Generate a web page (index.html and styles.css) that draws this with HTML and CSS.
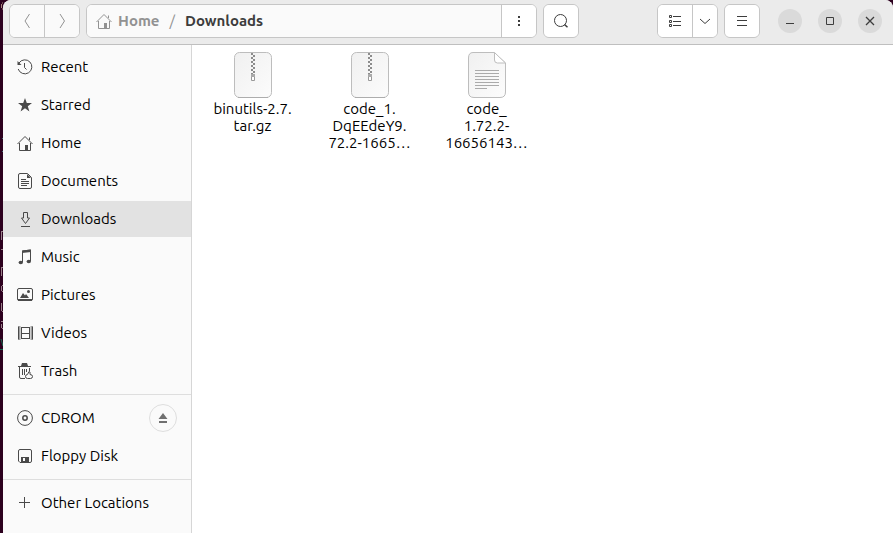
FILE: index.html
```html
<!DOCTYPE html>
<html lang="en">
<head>
<meta charset="utf-8">
<meta name="viewport" content="width=device-width, initial-scale=1">
<title>Downloads</title>
<link rel="stylesheet" href="styles.css">
</head>
<body>
<div class="desktop">
  <svg class="backdrop" viewBox="0 0 3 533" aria-hidden="true">
    <path d="M1.500 4v4M2 3h1M2 9h1" stroke="#a8847c"/>
    <path d="M2 138.500h1M2 151.500h1" stroke="#466d78"/>
    <path d="M1.500 231v9M2 231.500h1M1 249.500h2M1.500 267v9M2 267.500h1M1.500 286v5M2 285.500h1M2 291.500h1M1.500 303v8M2 311.500h1M1.500 324v4M1 321.500h2M2 328.500h1" stroke="#987f88"/>
    <path d="M1 339l2 7M0 349.500h3" stroke="#176a4d"/>
  </svg>
  <div class="window">
    <header class="headerbar">
      <div class="group">
        <button class="btn dim" type="button" aria-label="Back"><svg width="16" height="16" viewBox="0 0 16 16"><path d="M10.500 1 6 8l4.500 7"/></svg></button>
        <button class="btn dim" type="button" aria-label="Forward"><svg width="16" height="16" viewBox="0 0 16 16"><path d="M6 1l4.500 7L6 15"/></svg></button>
      </div>
      <div class="group pathbar">
        <nav class="crumbs" aria-label="Path">
          <a class="crumb" href="#home"><svg width="16" height="16" viewBox="0 0 16 16"><path d="M.5 9 8 1.500 15.500 9M2.500 8v7.500h11V8M12.500 5V2.500"/><path class="solid" d="M8 10h3v5H8z"/></svg>Home</a>
          <span class="slash">/</span>
          <a class="crumb current" href="#downloads">Downloads</a>
        </nav>
        <button class="btn" type="button" aria-label="Path menu"><svg width="16" height="16" viewBox="0 0 16 16"><path class="solid" d="M7 3h2v2H7zM7 7h2v2H7zM7 11h2v2H7z"/></svg></button>
      </div>
      <div class="group">
        <button class="btn" type="button" aria-label="Search"><svg width="16" height="16" viewBox="0 0 16 16"><circle cx="7.500" cy="7.500" r="6"/><path d="M11.500 11.500 14.500 14.300" stroke-width="1.500"/></svg></button>
      </div>
      <div class="spacer"></div>
      <div class="group">
        <button class="btn" type="button" aria-label="List view"><svg width="16" height="16" viewBox="0 0 16 16"><path d="M6 3.500h8M6 8.500h8M6 12.500h8M2.500 2.500h2v2h-2zM2.500 7.500h2v2h-2zM2.500 11.500h2v2h-2z"/></svg></button>
        <button class="btn narrow" type="button" aria-label="View options"><svg width="16" height="16" viewBox="0 0 16 16"><path d="m3 6 5 4.500L13 6"/></svg></button>
      </div>
      <div class="group">
        <button class="btn" type="button" aria-label="Main menu"><svg width="16" height="16" viewBox="0 0 16 16"><path d="M3 3.500h10M3 7.500h10M3 12.500h10"/></svg></button>
      </div>
      <div class="controls">
        <button class="round" type="button" aria-label="Minimize"><svg width="16" height="16" viewBox="0 0 16 16"><path d="M4 10.500h8"/></svg></button>
        <button class="round" type="button" aria-label="Maximize"><svg width="16" height="16" viewBox="0 0 16 16"><path d="M4.500 4.500h7v7h-7z"/></svg></button>
        <button class="round" type="button" aria-label="Close"><svg width="16" height="16" viewBox="0 0 16 16"><path d="m4 4 8 8M12 4l-8 8" stroke-width="1.300"/></svg></button>
      </div>
    </header>
    <div class="body">
      <aside class="sidebar">
        <ul class="places">
          <li class="row"><a class="place" href="#recent"><svg width="16" height="16" viewBox="0 0 16 16"><path d="M2 4A7 7 0 1 1 1.200 10M7.500 4v4.500l2 2"/><path class="solid" d="M.5 2v4h4z"/></svg>Recent</a></li>
          <li class="row"><a class="place" href="#starred"><svg width="16" height="16" viewBox="0 0 16 16"><path class="solid" d="m8 1 1.800 5H15l-4.200 3.200L12.400 14.500 8 11.300l-4.400 3.200 1.600-5.300L1 6h5.200z"/></svg>Starred</a></li>
          <li class="row"><a class="place" href="#home"><svg width="16" height="16" viewBox="0 0 16 16"><path d="M.5 9 8 1.500 15.500 9M2.500 8v7.500h11V8M12.500 5V2.500"/><path class="solid" d="M8 10h3v5H8z"/></svg>Home</a></li>
          <li class="row"><a class="place" href="#documents"><svg width="16" height="16" viewBox="0 0 16 16"><path d="M3 .5h7.500l4 4V14q0 1.500-1.500 1.500H3Q1.500 15.500 1.500 14V2Q1.500.5 3 .5M4 6.500h5M4 8.500h8M4 10.500h8M4 12.500h6"/><path class="solid" d="M10 1v4h4z"/></svg>Documents</a></li>
          <li class="row selected"><a class="place" href="#downloads" aria-current="page"><svg width="16" height="16" viewBox="0 0 16 16"><path d="M6.500 1.500h4V7h2L8.500 12.500 4.500 7h2zM4 15.500h9"/></svg>Downloads</a></li>
          <li class="row"><a class="place" href="#music"><svg width="16" height="16" viewBox="0 0 16 16"><path d="M5.500 13V2l8-1v11"/><path class="solid" d="M5 1.500 14 .5V3L5 4z"/><ellipse class="solid" cx="3.800" cy="13.500" rx="2.200" ry="1.800"/><ellipse class="solid" cx="11.800" cy="12.500" rx="2.200" ry="1.800"/></svg>Music</a></li>
          <li class="row"><a class="place" href="#pictures"><svg width="16" height="16" viewBox="0 0 16 16"><rect x=".5" y="1.500" width="15" height="12" rx="1.500"/><path class="solid" d="M1 12h14v2H1zM3 11l3-5 2 2.500L9 7l3 4z"/><circle class="solid" cx="11.500" cy="4.500" r="1.500"/></svg>Pictures</a></li>
          <li class="row"><a class="place" href="#videos"><svg width="16" height="16" viewBox="0 0 16 16"><path d="M4.500 2v12M12.500 2v12M4 2.500h9M4 8.500h9M4 13.500h9"/><path d="M2.500 1.500v13M14.500 1.500v13" stroke-width="2" stroke-dasharray="1 1"/><path d="M1.500 1.500v13M15.500 1.500v13"/></svg>Videos</a></li>
          <li class="row"><a class="place" href="#trash"><svg width="16" height="16" viewBox="0 0 16 16"><path d="M1 3.500h13M2.500 4v10q0 1.500 1.500 1.500h4M12.500 5v3M5.500 6v6M7.500 6v6M9.500 6v3"/><path class="solid" d="M5 0h5l1 3H4z"/><path d="M8.500 13.500q0-2 2-2l1.500-3 1 .5v2.500q2.500 0 2.500 2t-2 2h-3q-2 0-2-2"/></svg>Trash</a></li>
        </ul>
        <ul class="places">
          <li class="row"><a class="place" href="#cdrom"><svg width="16" height="16" viewBox="0 0 16 16"><circle cx="8" cy="8" r="7.400"/><circle cx="8" cy="8" r="2.200" stroke-width="1.500"/></svg>CDROM</a><button class="eject" type="button" aria-label="Eject CDROM"><svg width="16" height="16" viewBox="0 0 16 16"><path class="solid" d="m8 3 4.500 6h-9zM4 11h8v2H4z"/></svg></button></li>
          <li class="row"><a class="place" href="#floppy"><svg width="16" height="16" viewBox="0 0 16 16"><path d="M3 1.500h10q1.500 0 1.500 1.500v10q0 1.500-1.500 1.500H3L1.500 13V3Q1.500 1.500 3 1.500"/><path class="solid" fill-rule="evenodd" d="M4 9h8v5H4zM6 10v3h2v-3z"/></svg>Floppy Disk</a></li>
        </ul>
        <ul class="places">
          <li class="row"><a class="place" href="#other"><svg width="16" height="16" viewBox="0 0 16 16"><path d="M2 7.500h11M7.500 2v11"/></svg>Other Locations</a></li>
        </ul>
      </aside>
      <main class="files">
        <figure class="file">
          <svg class="thumb" width="40" height="48" viewBox="0 0 40 48"><use href="#sheet"/><use href="#zip"/></svg>
          <figcaption>binutils-2.7.<br>tar.gz</figcaption>
        </figure>
        <figure class="file">
          <svg class="thumb" width="40" height="48" viewBox="0 0 40 48"><use href="#sheet"/><use href="#zip"/></svg>
          <figcaption>code_1.<br>DqEEdeY9.<br>72.2-1665…</figcaption>
        </figure>
        <figure class="file">
          <svg class="thumb" width="40" height="48" viewBox="0 0 40 48"><path d="M6 1.500h21L38.500 12v29q0 5.500-5.500 5.500H7q-5.500 0-5.500-5.500V7Q1.500 1.500 6 1.500" fill="url(#paper)" stroke="#bdbdbd"/><path d="M27.500 1.500V9q0 3 3 3h8z" fill="#fff" stroke="#bdbdbd"/><path d="M8 19.500h24M8 22.500h24M8 25.500h24M8 28.500h24M8 31.500h24M8 34.500h24M8 37.500h12" stroke="#aaa"/></svg>
          <figcaption>code_<br>1.72.2-<br>16656143…</figcaption>
        </figure>
      </main>
    </div>
  </div>
</div>
<svg class="defs" width="0" height="0" aria-hidden="true">
  <defs>
    <linearGradient id="paper" x1="0" y1="0" x2="1" y2="1"><stop offset="0" stop-color="#f0f0f0"/><stop offset="1" stop-color="#fcfcfc"/></linearGradient>
    <g id="sheet"><rect x="1.500" y="1.500" width="37" height="45" rx="5" fill="url(#paper)" stroke="#bdbdbd"/><path d="M5 46.500h30" stroke="#adadad"/></g>
    <g id="zip"><path d="M19 2v21" stroke="#8c8c8c" stroke-width="2" stroke-dasharray="2 2"/><path d="M21 4v19" stroke="#8c8c8c" stroke-width="2" stroke-dasharray="2 2"/><path d="M18.500 23.500h3v6h-3z" fill="#fff" stroke="#999"/><path d="M18 23h4v3h-4z" fill="#aaa"/></g>
  </defs>
</svg>
</body>
</html>
```
FILE: styles.css
```css
* { box-sizing: border-box; }
body {
  margin: 0;
  background: #2c001e;
  color: #000;
  font: 15px/17px Ubuntu, "Noto Sans", "Open Sans", sans-serif;
}
a { color: inherit; text-decoration: none; }
svg { display: block; flex: none; fill: none; stroke: currentColor; }
.solid { fill: currentColor; stroke: none; }
.defs { position: absolute; }
.desktop { display: flex; min-height: 100vh; overflow: hidden; }
.backdrop { width: 3px; height: 533px; }
.window {
  flex: 1;
  display: flex;
  flex-direction: column;
  min-width: 0;
  overflow: hidden;
  border-radius: 8px 8px 0 0;
  background: #fff;
}
.headerbar {
  display: flex;
  gap: 6px;
  padding: 4px 11px 6px 6px;
  border-bottom: 1px solid #bfbfbf;
  background: #ebebeb;
  line-height: 16px;
}
.group {
  display: flex;
  height: 34px;
  overflow: hidden;
  border: 1px solid #c6c6c6;
  border-radius: 6px;
  background: #fff;
}
.btn {
  display: flex;
  align-items: center;
  justify-content: center;
  width: 34px;
  padding: 0;
  border: 0;
  background: #fff;
  color: #3d3d3d;
}
.btn + .btn, .crumbs + .btn { width: 35px; border-left: 1px solid #c6c6c6; }
.btn + .btn.narrow { width: 25px; }
.btn.dim { background: #fafafa; color: #929292; }
.pathbar { flex: 0 1 451px; min-width: 0; }
.crumbs {
  flex: 1;
  display: flex;
  align-items: center;
  gap: 10px;
  padding-left: 9px;
  background: #fafafa;
  font-weight: 700;
}
.crumb { display: flex; align-items: center; gap: 6px; color: #929292; }
.crumb.current { color: #3d3d3d; }
.slash { color: #929292; font-weight: 400; }
.spacer { flex: 1; }
.controls { display: flex; align-items: center; gap: 16px; padding-left: 12px; }
.round {
  display: grid;
  place-items: center;
  width: 24px;
  height: 24px;
  padding: 0;
  border: 0;
  border-radius: 50%;
  background: #dadada;
  color: #3d3d3d;
}
.body { flex: 1; display: flex; }
.sidebar {
  flex: none;
  width: 189px;
  padding-bottom: 6px;
  border-right: 1px solid #d6d6d6;
  background: #fafafa;
  line-height: 16px;
}
.places {
  display: flex;
  flex-direction: column;
  gap: 2px;
  margin: 0;
  padding: 4px 0 5px;
  list-style: none;
}
.places + .places { padding-top: 5px; border-top: 1px solid #dedede; }
.row { display: flex; align-items: center; height: 36px; padding-right: 14px; }
.selected { background: #e2e2e2; }
.place { flex: 1; display: flex; align-items: center; gap: 8px; padding-left: 14px; }
.place svg { color: #4a4a4a; }
.eject {
  display: grid;
  place-items: center;
  width: 28px;
  height: 28px;
  padding: 0;
  border: 1px solid #dedede;
  border-radius: 50%;
  background: #fafafa;
  color: #707070;
}
.files {
  flex: 1;
  display: grid;
  grid-template-columns: repeat(auto-fill, 117px);
  align-content: start;
  padding: 6px 2px;
}
.file { display: flex; flex-direction: column; align-items: center; margin: 0; text-align: center; }
.thumb { stroke: none; }
.file figcaption { padding-top: 1px; }
```
